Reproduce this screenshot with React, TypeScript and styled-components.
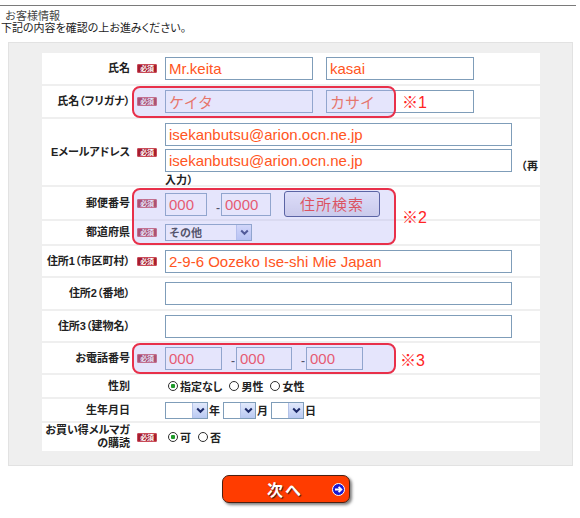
import React from "react";
import styled, { createGlobalStyle } from "styled-components";

const GlobalStyle = createGlobalStyle`
  html, body { margin: 0; padding: 0; background: #ffffff; }
  body { font-family: "Noto Sans CJK JP", "Noto Sans", sans-serif; }
  * { box-sizing: border-box; }
`;

const JP = `"Noto Sans CJK JP", "Noto Sans", sans-serif`;
const TIGHT = `"Liberation Sans", "Noto Sans CJK JP", sans-serif`;
const INPUT_FONT = `"Liberation Sans", "Noto Sans CJK JP", sans-serif`;

const Page = styled.div`
  width: 580px;
  height: 518px;
  overflow: hidden;
  position: relative;
`;

const TopRule = styled.div`
  margin: 5px 4px 0 0;
  height: 1px;
  background: #7a7a7a;
`;

const Heading = styled.div`
  margin: 4px 0 0 5px;
  font: 400 11px/13px ${TIGHT};
  color: #444;
`;

const Lead = styled.div`
  margin: -1px 0 0 1px;
  font: 400 11px/13px ${TIGHT};
  font-feature-settings: "palt";
  color: #222;
`;

const Panel = styled.div`
  margin: 7px 7px 0 8px;
  padding: 10px 32px 14px 33px;
  background: #efefef;
  border: 1px solid #e2e2e2;
`;

const FormTable = styled.div`
  position: relative;
  display: flex;
  flex-direction: column;
  gap: 2px;
`;

const Row = styled.div<{ $h: number }>`
  display: grid;
  grid-template-columns: 89px 34px 1fr;
  align-items: center;
  height: ${(p) => p.$h}px;
  background: #ffffff;
`;

const Label = styled.div`
  text-align: right;
  padding-right: 1px;
  font: 700 11px/13px ${TIGHT};
  font-feature-settings: "palt";
  color: #222;
`;

const BadgeCell = styled.div`
  display: flex;
  padding-left: 6px;
`;

const Badge = styled.span`
  display: inline-flex;
  align-items: center;
  justify-content: center;
  width: 20px;
  height: 9px;
  border-radius: 2px;
  background: #a51d2e;
  color: #ffffff;
  font: 700 7px/9px ${JP};
  letter-spacing: -0.2px;
  box-shadow: inset 0 0 0 1px #c94a58;
`;

const Field = styled.div<{ $gap?: number; $pt?: number }>`
  display: flex;
  align-items: center;
  gap: ${(p) => p.$gap ?? 0}px;
  padding-top: ${(p) => p.$pt ?? 0}px;
`;

const EmailField = styled.div`
  align-self: start;
  padding-top: 4px;
  font: 700 11px/14px ${JP};
  color: #222;
`;

const TextInput = styled.input<{ $w: number; $tone?: "orange" | "red"; $block?: boolean }>`
  display: ${(p) => (p.$block ? "block" : "inline-block")};
  vertical-align: bottom;
  width: ${(p) => p.$w}px;
  height: 23px;
  margin: ${(p) => (p.$block ? "0 0 3px 0" : "0")};
  padding: 0 3px;
  border: 1px solid #7f9db9;
  background: #ffffff;
  font: 400 15px/21px ${INPUT_FONT};
  color: ${(p) => (p.$tone === "red" ? "#ff2b2b" : "#ff5522")};
  outline: none;
`;

const Reinput = styled.span`
  margin-left: 4px;
`;

const Dash = styled.span`
  align-self: flex-end;
  margin: 0 1px 4px 9px;
  width: 4px;
  font: 700 11px/11px ${JP};
  color: #222;
`;

const SearchButton = styled.button`
  margin-left: 13px;
  width: 96px;
  height: 26px;
  padding: 0;
  border: 1px solid #2c3a78;
  border-radius: 3px;
  background: linear-gradient(#f2f2fa, #d6d6e6);
  font: 400 15px/22px ${JP};
  color: #f01e10;
  letter-spacing: 1px;
`;

const SelectBox = styled.div<{ $w: number }>`
  display: inline-flex;
  width: ${(p) => p.$w}px;
  height: 17px;
  border: 1px solid #7f9db9;
  background: #ffffff;
`;

const SelectText = styled.span`
  flex: 1;
  padding-left: 3px;
  font: 700 11px/15px ${JP};
  color: #222;
  overflow: hidden;
  white-space: nowrap;
`;

const ArrowBox = styled.span`
  width: 15px;
  display: flex;
  align-items: center;
  justify-content: center;
  background: linear-gradient(#e2e9fc, #b9c9f2);
  border-left: 1px solid #b4c3e8;
`;

const Unit = styled.span`
  margin: 0 3px 0 1px;
  font: 700 11px/12px ${JP};
  color: #222;
`;

const RadioGroup = styled.div`
  display: flex;
  align-items: center;
  gap: 7px;
  padding-left: 3px;
`;

const RadioItem = styled.span`
  display: inline-flex;
  align-items: center;
  gap: 2px;
  font: 700 11px/12px ${JP};
  font-feature-settings: "palt";
  color: #222;
`;

const RadioDot = styled.span<{ $on?: boolean }>`
  width: 10px;
  height: 10px;
  border-radius: 50%;
  border: 1px solid #2d2d2d;
  background: ${(p) =>
    p.$on ? "radial-gradient(circle, #1f9a2a 0 2px, #ffffff 2.5px)" : "#ffffff"};
`;

const Highlight = styled.div<{ $top: number; $h: number }>`
  position: absolute;
  left: 90px;
  top: ${(p) => p.$top}px;
  width: 264px;
  height: ${(p) => p.$h}px;
  border: 2px solid #e8304a;
  border-radius: 8px;
  background: rgba(180, 180, 245, 0.35);
  pointer-events: none;
`;

const Note = styled.div<{ $top: number; $left: number }>`
  position: absolute;
  left: ${(p) => p.$left}px;
  top: ${(p) => p.$top}px;
  font: 400 16px/18px ${INPUT_FONT};
  color: #ff2424;
`;

const ButtonBar = styled.div`
  padding: 9px 0 0 222px;
`;

const NextButton = styled.button`
  display: grid;
  grid-template-columns: 1fr auto 1fr;
  align-items: center;
  width: 128px;
  height: 28px;
  padding: 0 4px 0 0;
  border: 1px solid #4a2012;
  border-radius: 7px;
  background: #ff3c00;
  box-shadow: 2px 2px 3px rgba(0, 0, 0, 0.5);
  color: #ffffff;
  font: 700 16px/20px ${JP};
  text-shadow: 1px 1px 1px #3a1a10;
  letter-spacing: 2px;
`;

const NextLabel = styled.span`
  grid-column: 2;
  padding-left: 2px;
`;

const NextIcon = styled.span`
  grid-column: 3;
  justify-self: end;
  display: flex;
`;

const Chevron = () => (
  <svg width="9" height="7" viewBox="0 0 9 7">
    <path d="M1.2 1.5 L4.5 4.8 L7.8 1.5" fill="none" stroke="#1c2a68" strokeWidth="2" />
  </svg>
);

const Select = ({ w, text }: { w: number; text?: string }) => (
  <SelectBox $w={w}>
    <SelectText>{text}</SelectText>
    <ArrowBox>
      <Chevron />
    </ArrowBox>
  </SelectBox>
);

const Radio = ({ on, children }: { on?: boolean; children: React.ReactNode }) => (
  <RadioItem>
    <RadioDot $on={on} />
    {children}
  </RadioItem>
);

const Req = () => (
  <BadgeCell>
    <Badge>必須</Badge>
  </BadgeCell>
);

const NoBadge = () => <BadgeCell />;

export default function App() {
  return (
    <Page>
      <GlobalStyle />
      <TopRule />
      <Heading>お客様情報</Heading>
      <Lead>下記の内容を確認の上お進みください。</Lead>
      <Panel>
        <FormTable>
          <Row $h={31}>
            <Label>氏名</Label>
            <Req />
            <Field $gap={13}>
              <TextInput $w={148} readOnly value="Mr.keita" />
              <TextInput $w={148} readOnly value="kasai" />
            </Field>
          </Row>
          <Row $h={31}>
            <Label>氏名（フリガナ）</Label>
            <Req />
            <Field $gap={13}>
              <TextInput $w={148} readOnly value="ケイタ" />
              <TextInput $w={148} readOnly value="カサイ" />
            </Field>
          </Row>
          <Row $h={66}>
            <Label>Eメールアドレス</Label>
            <Req />
            <EmailField>
              <TextInput $w={347} $block readOnly value="isekanbutsu@arion.ocn.ne.jp" />
              <TextInput $w={347} readOnly value="isekanbutsu@arion.ocn.ne.jp" />
              <Reinput>（再入力）</Reinput>
            </EmailField>
          </Row>
          <Row $h={32}>
            <Label>郵便番号</Label>
            <Req />
            <Field $pt={2}>
              <TextInput $w={42} $tone="red" readOnly value="000" />
              <Dash>-</Dash>
              <TextInput $w={50} $tone="red" readOnly value="0000" />
              <SearchButton type="button">住所検索</SearchButton>
            </Field>
          </Row>
          <Row $h={23}>
            <Label>都道府県</Label>
            <Req />
            <Field>
              <Select w={87} text="その他" />
            </Field>
          </Row>
          <Row $h={30}>
            <Label>住所1（市区町村）</Label>
            <Req />
            <Field>
              <TextInput $w={347} readOnly value="2-9-6 Oozeko Ise-shi Mie Japan" />
            </Field>
          </Row>
          <Row $h={31}>
            <Label>住所2（番地）</Label>
            <NoBadge />
            <Field>
              <TextInput $w={347} readOnly value="" />
            </Field>
          </Row>
          <Row $h={30}>
            <Label>住所3（建物名）</Label>
            <NoBadge />
            <Field>
              <TextInput $w={347} readOnly value="" />
            </Field>
          </Row>
          <Row $h={30}>
            <Label>お電話番号</Label>
            <Req />
            <Field>
              <TextInput $w={57} $tone="red" readOnly value="000" />
              <Dash>-</Dash>
              <TextInput $w={56} $tone="red" readOnly value="000" />
              <Dash>-</Dash>
              <TextInput $w={57} $tone="red" readOnly value="000" />
            </Field>
          </Row>
          <Row $h={22}>
            <Label>性別</Label>
            <NoBadge />
            <RadioGroup>
              <Radio on>指定なし</Radio>
              <Radio>男性</Radio>
              <Radio>女性</Radio>
            </RadioGroup>
          </Row>
          <Row $h={22}>
            <Label>生年月日</Label>
            <NoBadge />
            <Field>
              <Select w={43} />
              <Unit>年</Unit>
              <Select w={33} />
              <Unit>月</Unit>
              <Select w={33} />
              <Unit>日</Unit>
            </Field>
          </Row>
          <Row $h={28}>
            <Label>
              お買い得メルマガ
              <br />
              の購読
            </Label>
            <Req />
            <RadioGroup>
              <Radio on>可</Radio>
              <Radio>否</Radio>
            </RadioGroup>
          </Row>

          <Highlight $top={33} $h={32} />
          <Note $left={360} $top={41}>※1</Note>
          <Highlight $top={135} $h={57} />
          <Note $left={360} $top={156}>※2</Note>
          <Highlight $top={290} $h={31} />
          <Note $left={358} $top={299}>※3</Note>
        </FormTable>
      </Panel>
      <ButtonBar>
        <NextButton type="button">
          <NextLabel>次へ</NextLabel>
          <NextIcon>
            <svg width="13" height="13" viewBox="0 0 13 13">
              <circle cx="6.5" cy="6.5" r="6" fill="#1818d0" stroke="#ffffff" strokeWidth="1" />
              <path d="M3 6.5 H9.2 M6.6 3.8 L9.4 6.5 L6.6 9.2" fill="none" stroke="#ffffff" strokeWidth="1.8" />
            </svg>
          </NextIcon>
        </NextButton>
      </ButtonBar>
    </Page>
  );
}
